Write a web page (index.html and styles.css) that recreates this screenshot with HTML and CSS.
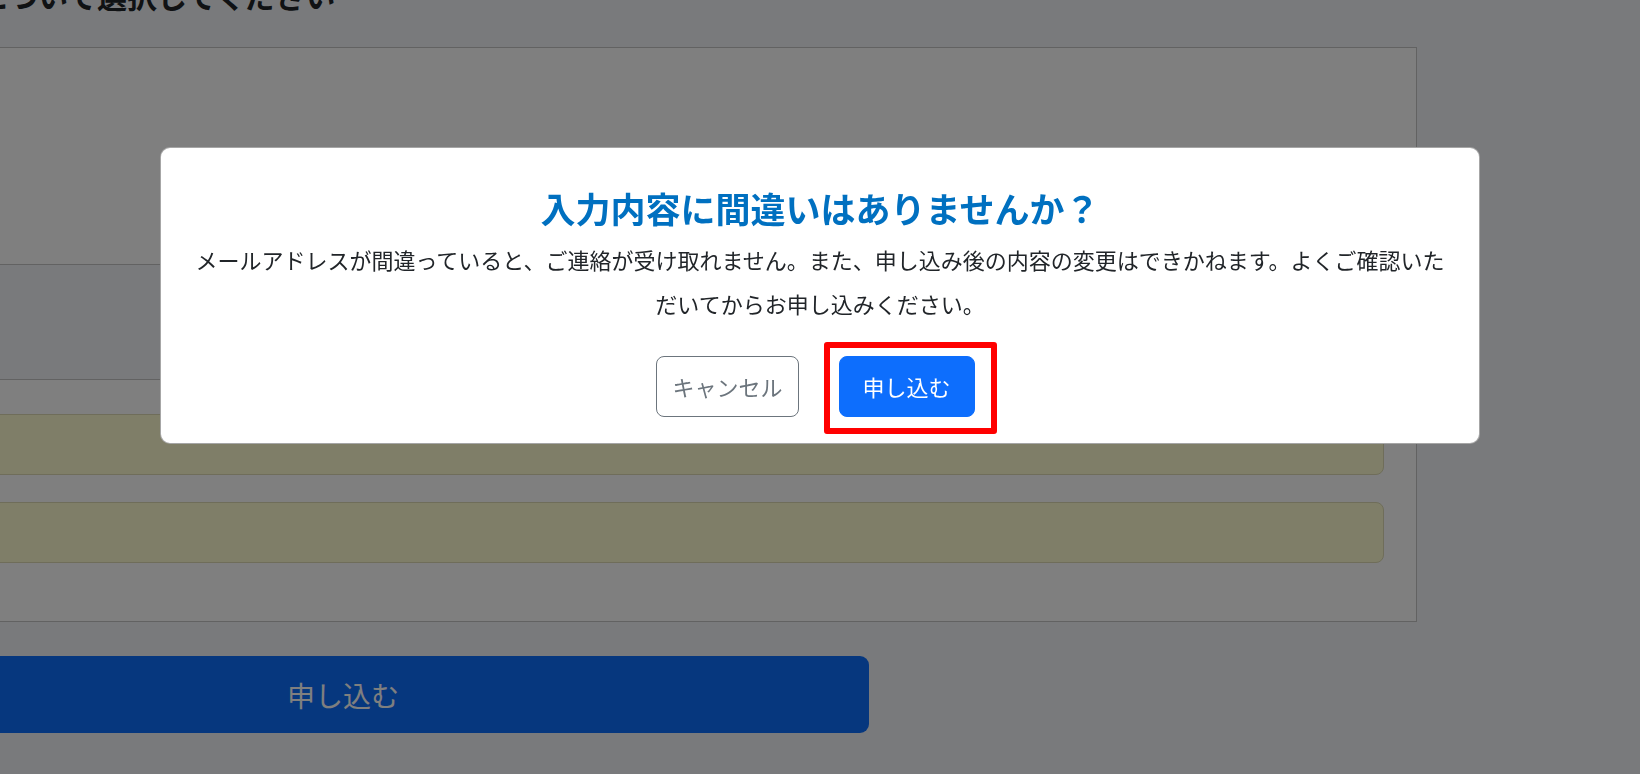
FILE: index.html
```html
<!DOCTYPE html>
<html lang="ja">
<head>
    <meta charset="UTF-8">
    <meta name="viewport" content="width=device-width, initial-scale=1.0">
    <title>お申し込み確認</title>
    <link rel="stylesheet" href="styles.css">
</head>
<body>
    <!-- Form page (behind the modal) -->
    <main class="page">
        <h2 class="page-title">について選択してください</h2>

        <div class="form-panel">
            <div class="panel-top"></div>
            <div class="panel-bar"></div>
            <div class="panel-fields">
                <div class="field"></div>
                <div class="field"></div>
            </div>
        </div>

        <button class="submit-wide">申し込む</button>
    </main>

    <!-- Confirm Modal -->
    <div class="modal-backdrop"></div>
    <div class="modal-wrap">
        <div class="modal">
            <h1 class="modal-title">入力内容に間違いはありませんか？</h1>
            <p class="modal-text">メールアドレスが間違っていると、ご連絡が受け取れません。また、申し込み後の内容の変更はできかねます。よくご確認いただいてからお申し込みください。</p>
            <div class="modal-actions">
                <button class="btn btn-cancel">キャンセル</button>
                <button class="btn btn-submit marked">申し込む</button>
            </div>
        </div>
    </div>
</body>
</html>
```

FILE: styles.css
```css
:root {
    --page-bg: #f2f4f8;
    --text-primary: #212529;
    --title-blue: #0070c0;
    --primary: #0d6efd;
    --secondary: #6c757d;
    --field-bg: #fefcd0;
    --line: #c4c4c4;
}

* {
    margin: 0;
    padding: 0;
    box-sizing: border-box;
}

body {
    font-family: "Noto Sans CJK JP", "Noto Sans", sans-serif;
    background-color: var(--page-bg);
    color: var(--text-primary);
    overflow: hidden;
    height: 774px;
}

/* Page behind the modal (scrolled to the right) */
.page {
    margin-left: -200px;
    margin-top: -23px;
}

.page-title {
    font-size: 30px;
    font-weight: 700;
    line-height: 36px;
    margin-left: 178px;
    margin-bottom: 34px;
}

.form-panel {
    width: 1617px;
    background: #ffffff;
    border: 1px solid var(--line);
}

.panel-top {
    height: 217px;
    border-bottom: 1px solid var(--line);
}

.panel-bar {
    height: 115px;
    background: var(--page-bg);
    border-bottom: 1px solid var(--line);
}

.panel-fields {
    display: flex;
    flex-direction: column;
    gap: 27px;
    padding: 34px 32px 58px 0;
}

.field {
    height: 61px;
    background: var(--field-bg);
    border: 1px solid #dedbb4;
    border-radius: 8px;
}

.submit-wide {
    display: block;
    width: 1052px;
    height: 77px;
    margin: 34px 0 0 17px;
    background: var(--primary);
    color: #ffffff;
    border: none;
    border-radius: 9px;
    font-family: inherit;
    font-size: 28px;
}

/* Modal */
.modal-backdrop {
    position: fixed;
    inset: 0;
    background: rgba(0, 0, 0, 0.5);
}

.modal-wrap {
    position: fixed;
    inset: 0;
    display: flex;
    justify-content: center;
    align-items: flex-start;
    padding-top: 147px;
}

.modal {
    width: 1320px;
    background: #ffffff;
    border: 1px solid rgba(0, 0, 0, 0.35);
    border-radius: 10px;
    padding: 39px 25px 26px;
    text-align: center;
}

.modal-title {
    font-size: 35px;
    font-weight: 700;
    line-height: 42px;
    color: var(--title-blue);
    margin-bottom: 8px;
}

.modal-text {
    font-size: 22px;
    line-height: 44px;
    color: var(--text-primary);
}

.modal-actions {
    display: flex;
    justify-content: center;
    gap: 40px;
    margin-top: 31px;
    padding-right: 9px;
}

.btn {
    font-family: inherit;
    font-size: 22px;
    line-height: 33px;
    padding: 13px 16px;
    border-radius: 8px;
    border: 1px solid transparent;
    cursor: pointer;
}

.btn-cancel {
    background: #ffffff;
    color: var(--secondary);
    border-color: var(--secondary);
    padding-left: 15px;
    padding-right: 15px;
}

.btn-submit {
    background: var(--primary);
    border-color: var(--primary);
    color: #ffffff;
    padding-left: 23px;
    padding-right: 23px;
}

/* red annotation frame */
.marked {
    position: relative;
}

.marked::after {
    content: '';
    position: absolute;
    top: -15px;
    left: -16px;
    right: -23px;
    bottom: -18px;
    border: 6px solid #ff0000;
    border-radius: 3px;
}
```
